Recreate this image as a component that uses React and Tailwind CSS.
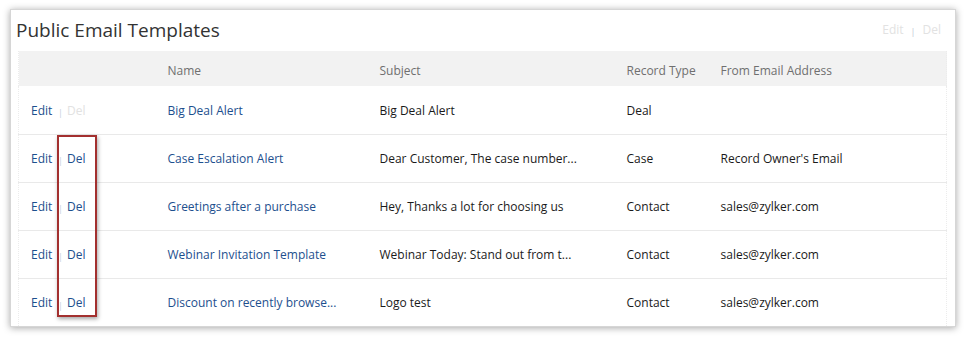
import React from 'react';

const rows = [
  { name: 'Big Deal Alert', subject: 'Big Deal Alert', type: 'Deal', from: '', canDelete: false },
  { name: 'Case Escalation Alert', subject: 'Dear Customer, The case number...', type: 'Case', from: "Record Owner's Email", canDelete: true },
  { name: 'Greetings after a purchase', subject: 'Hey, Thanks a lot for choosing us', type: 'Contact', from: 'sales@zylker.com', canDelete: true },
  { name: 'Webinar Invitation Template', subject: 'Webinar Today: Stand out from t...', type: 'Contact', from: 'sales@zylker.com', canDelete: true },
  { name: 'Discount on recently browse...', subject: 'Logo test', type: 'Contact', from: 'sales@zylker.com', canDelete: true },
];

export default function App() {
  return (
    <div className="w-[965px] h-[338px] bg-white pt-[9px] pl-[10px] font-['Open_Sans',sans-serif]">
      <div className="w-[946px] h-[318px] bg-white border border-[#d6d6d6] shadow-[0_1px_7px_rgba(0,0,0,0.35)] flex flex-col">
        <div className="flex items-center justify-between h-[43px] pl-[5px] pr-[14px]">
          <h1 className="text-[19px] text-[#333] leading-none">Public Email Templates</h1>
          <div className="flex items-center text-[12px] text-[#e2e2e2] pb-[1px]">
            <span>Edit</span>
            <span className="text-[9px] text-[#bfc8d4] px-[7px] pt-[4px]">|</span>
            <span>Del</span>
          </div>
        </div>

        <div className="relative ml-[7px] mt-[1px] w-[929px]">
          <table className="w-full border-collapse table-fixed text-[12px] border-x border-dotted border-[#ececec]">
            <colgroup>
              <col className="w-[136px]" />
              <col className="w-[212px]" />
              <col className="w-[247px]" />
              <col className="w-[94px]" />
              <col />
            </colgroup>
            <thead>
              <tr className="bg-[#f2f2f2] h-[35px] text-[#6f6f6f]">
                <th className="font-normal text-left pl-[12px] pt-[4px]"></th>
                <th className="font-normal text-left pl-[13px] pt-[4px]">Name</th>
                <th className="font-normal text-left pl-[13px] pt-[4px]">Subject</th>
                <th className="font-normal text-left pl-[13px] pt-[4px]">Record Type</th>
                <th className="font-normal text-left pl-[13px] pt-[4px]">From Email Address</th>
              </tr>
            </thead>
            <tbody>
              {rows.map((row, i) => (
                <tr key={i} className={`h-[48px] ${i > 0 ? 'border-t border-[#e9e9e9]' : ''}`}>
                  <td className="pl-[12px] pt-[2px]">
                    <div className="flex items-center">
                      <span className="w-[27px] text-[#1d4f8e]">Edit</span>
                      <span className="w-[9px] text-[9px] text-[#c5cfdc] pt-[4px]">|</span>
                      <span className={row.canDelete ? 'text-[#1d4f8e]' : 'text-[#e2e2e2]'}>Del</span>
                    </div>
                  </td>
                  <td className="pl-[13px] pt-[2px] text-[#1d4f8e] whitespace-nowrap">{row.name}</td>
                  <td className="pl-[13px] pt-[2px] text-[#1a1a1a] whitespace-nowrap">{row.subject}</td>
                  <td className="pl-[13px] pt-[2px] text-[#1a1a1a]">{row.type}</td>
                  <td className="pl-[13px] pt-[2px] text-[#1a1a1a] whitespace-nowrap">{row.from}</td>
                </tr>
              ))}
            </tbody>
          </table>

          {/* highlight around the Del links */}
          <div className="absolute left-[39px] top-[84px] w-[40px] h-[182px] border-2 border-[#a3302f] shadow-[1px_2px_4px_rgba(0,0,0,0.35)] pointer-events-none" />
        </div>
      </div>
    </div>
  );
}
